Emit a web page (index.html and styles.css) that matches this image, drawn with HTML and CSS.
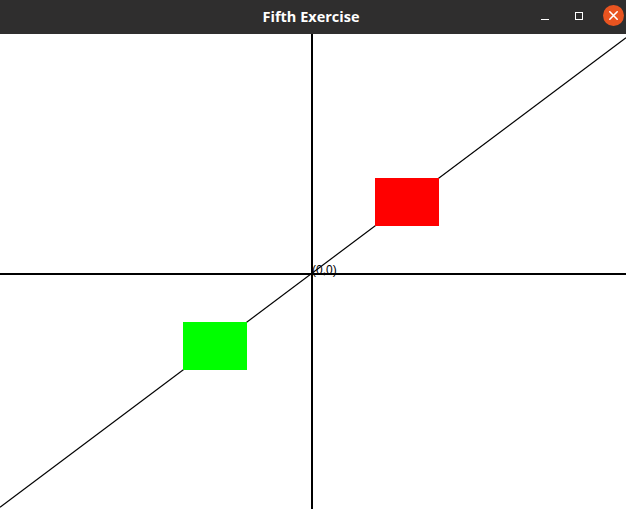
FILE: index.html
```html
<!DOCTYPE html>
<html>
<head>
<meta charset="utf-8">
<title>Fifth Exercise</title>
<link rel="stylesheet" href="styles.css">
</head>
<body>
<div class="window">
  <header class="titlebar">
    <div class="title">Fifth Exercise</div>
    <div class="controls">
      <span class="btn btn-min"><span class="min-bar"></span></span>
      <span class="btn btn-max"><span class="max-box"></span></span>
      <span class="btn btn-close">
        <svg width="21" height="21" viewBox="0 0 21 21">
          <circle cx="10.5" cy="10.5" r="10.5" fill="#e95420"/>
          <path d="M6.8 6.8 L14.2 14.2 M14.2 6.8 L6.8 14.2" stroke="#fff" stroke-width="1.6" stroke-linecap="round"/>
        </svg>
      </span>
    </div>
  </header>
  <main class="canvas">
    <svg class="plot" width="626" height="475" viewBox="0 0 626 475">
      <rect x="311" y="0" width="2" height="475" fill="#000" shape-rendering="crispEdges"/>
      <rect x="0" y="239" width="626" height="2" fill="#000" shape-rendering="crispEdges"/>
      <line x1="0" y1="473.2" x2="626" y2="3.7" stroke="#000" stroke-width="1.2"/>
      <rect x="375" y="144" width="64" height="48" fill="#ff0000" shape-rendering="crispEdges"/>
      <rect x="183" y="288" width="64" height="48" fill="#00ff00" shape-rendering="crispEdges"/>
      <text x="312" y="240" class="origin">(0,0)</text>
    </svg>
  </main>
</div>
</body>
</html>
```

FILE: styles.css
```css
html, body {
  margin: 0;
  padding: 0;
  background: #ffffff;
}
.window {
  width: 626px;
  height: 509px;
  display: flex;
  flex-direction: column;
  overflow: hidden;
}
.titlebar {
  height: 34px;
  flex: 0 0 34px;
  background: #2f2e2e;
  position: relative;
  display: flex;
  align-items: center;
  justify-content: center;
}
.title {
  color: #ffffff;
  font-family: "Open Sans", "DejaVu Sans", sans-serif;
  font-weight: 700;
  font-size: 14.5px;
  line-height: 34px;
  margin-left: -4px;
}
.controls {
  position: absolute;
  right: 2px;
  top: 0;
  height: 34px;
  display: flex;
  align-items: center;
}
.btn {
  display: flex;
  align-items: center;
  justify-content: center;
}
.btn-min {
  width: 8px;
  height: 34px;
  margin-right: 26px;
}
.min-bar {
  display: block;
  width: 8px;
  height: 1px;
  background: #ffffff;
  margin-top: 5px;
}
.btn-max {
  width: 8px;
  height: 34px;
  margin-right: 20px;
}
.max-box {
  display: block;
  width: 6px;
  height: 6px;
  border: 1px solid #ffffff;
  margin-top: -3px;
}
.btn-close {
  width: 21px;
  height: 21px;
  margin-top: -4px;
}
.btn-close svg {
  display: block;
}
.canvas {
  flex: 1 1 auto;
  background: #ffffff;
}
.plot {
  display: block;
}
.origin {
  font-family: "Liberation Sans", Arial, sans-serif;
  font-size: 12px;
  fill: #000000;
}
```
